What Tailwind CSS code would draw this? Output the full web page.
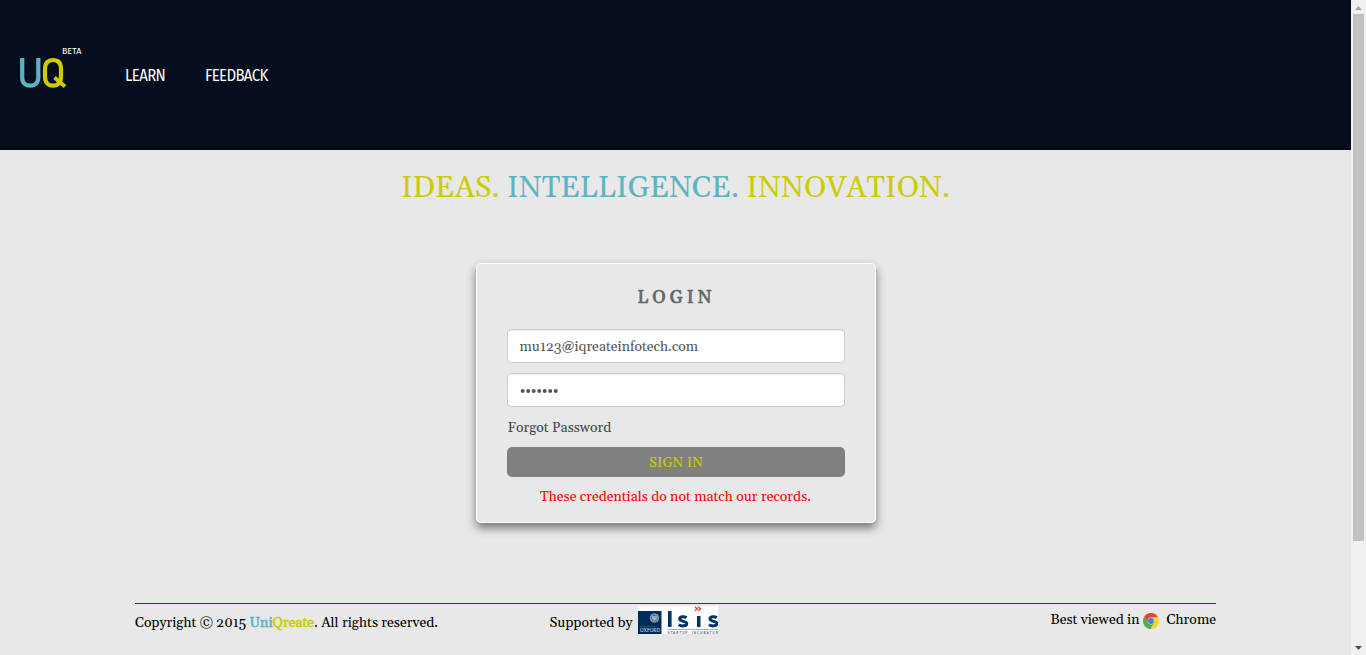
<!DOCTYPE html>
<html lang="en">
<head>
<meta charset="utf-8">
<title>UniQreate - Login</title>
<script src="https://cdn.jsdelivr.net/npm/@tailwindcss/browser@4"></script>
</head>
<body class="flex h-[655px] w-[1366px] overflow-hidden bg-[#e8e8e8] font-[Georgia,Gelasio,'Liberation_Serif',serif] text-[14px] leading-5 text-black">
<div class="flex w-[1351px] shrink-0 flex-col">
  <header class="flex h-[150px] shrink-0 items-start border-b-4 border-[#030a16] bg-[#060d1c] pl-5 font-['Trebuchet_MS','Fira_Sans','Open_Sans',sans-serif] text-white">
    <a class="relative mt-[57px] block h-8 w-[105px]">
      <svg class="block h-8 w-12" viewBox="0 0 48 32" fill="none" stroke-width="4.2">
        <path d="M2.2 1V20.5C2.2 26 5.5 28.7 10.2 28.7S18.3 26 18.3 20.5V1" stroke="#5bb4c3"/>
        <path d="M25 12C25 6 28 3 33 3S41 6 41 12V19.5C41 25.5 38 28.7 33 28.7S25 25.5 25 19.5Z" stroke="#cccc00"/>
        <path d="M34.5 20.5L45 29.5" stroke="#cccc00" stroke-width="3.8"/>
      </svg>
      <span class="absolute -top-[12px] left-[42px] scale-y-110 text-[9px] leading-3 tracking-[-0.1px]">BETA</span>
    </a>
    <nav class="mt-[65px] flex scale-y-110 text-[15px] tracking-[-0.65px]"><a class="w-20 whitespace-nowrap">LEARN</a><a class="whitespace-nowrap">FEEDBACK</a></nav>
  </header>
  <main class="flex h-[453px] shrink-0 flex-col items-center">
    <h1 class="mt-[22px] whitespace-nowrap text-[30px] leading-[33px] text-[#cccc00]">IDEAS. <span class="text-[#5bb4c3]">INTELLIGENCE.</span> INNOVATION.</h1>
    <section class="mt-[58px] ml-px flex h-[260px] w-[400px] flex-col rounded-[5px] border border-white px-[30px] shadow-[0_5px_10px_rgba(0,0,0,0.5)]">
      <h2 class="mt-[24px] pl-px text-center text-[18px] leading-5 tracking-[4px] text-[#666] [-webkit-text-stroke:0.7px_#666]">LOGIN</h2>
      <div class="mt-[21px] h-[34px] rounded-[4px] border border-[#ccc] bg-white pl-[11.5px] pt-[7px] text-[#555] shadow-[inset_0_1px_1px_rgba(0,0,0,0.075)]">mu123@iqreateinfotech.com</div>
      <div class="mt-[10px] flex h-[34px] items-center rounded-[4px] border border-[#ccc] bg-white pl-[11.5px] pt-[1px] text-[#555] shadow-[inset_0_1px_1px_rgba(0,0,0,0.075)]">
        <svg class="h-[6px] w-10" viewBox="0 0 40 6" fill="#555"><circle cx="2.7" cy="3" r="2"/><circle cx="8.2" cy="3" r="2"/><circle cx="13.7" cy="3" r="2"/><circle cx="19.2" cy="3" r="2"/><circle cx="24.7" cy="3" r="2"/><circle cx="30.2" cy="3" r="2"/><circle cx="35.7" cy="3" r="2"/></svg>
      </div>
      <a class="mt-[11px] pl-[0.5px] text-[#444]">Forgot Password</a>
      <button class="mt-[9px] h-[30px] rounded-[5px] bg-[#808080] pt-[2px] text-[#cccc00]">SIGN IN</button>
      <p class="mt-[10px] pr-px text-center text-[#f00]">These credentials do not match our records.</p>
    </section>
  </main>
  <footer class="mx-[135px] flex items-start border-t border-[#003f9f]">
    <p class="mt-[9px] w-[414.5px] whitespace-nowrap">Copyright © 2015 <span class="text-[#5bb4c3] [-webkit-text-stroke:0.6px_#5bb4c3]">Uni</span><span class="text-[#cccc00] [-webkit-text-stroke:0.6px_#cccc00]">Qreate</span>. All rights reserved.</p>
    <div class="flex w-[300px]"><span class="mt-[9px] w-[88.5px] whitespace-nowrap">Supported by</span>
      <svg class="mt-[2px] h-7 w-20" viewBox="0 0 80 28">
        <path fill="#fff" d="M0 0h80v28H0z"/><path fill="#002b5c" d="M0 5h23.5v23H0z"/>
        <circle cx="16.5" cy="12" r="4.8" fill="#526d91"/><circle cx="16.5" cy="12" r="4" fill="none" stroke="#a8b6c9" stroke-width=".8"/><path d="M14 10h5v3l-2.5 2-2.5-2z" fill="#9aaac0"/>
        <text x="2" y="21" font-family="Liberation Serif" font-size="2.6" textLength="16" fill="#8e9fb8">UNIVERSITY OF</text>
        <text x="2" y="26" font-family="Liberation Serif" font-size="5.5" textLength="20" lengthAdjust="spacingAndGlyphs" fill="#dbe1ea">OXFORD</text>
        <path fill="#003366" d="M30 5h3.6v16H30zM59 10h3.5v11H59z"/>
        <path d="M48.5 11.8C46 10 41.5 10.6 41.7 13.2S49 15 48.8 17.6 43.5 20.7 40.7 18.6M78.8 11.8C76.3 10 71.8 10.6 72 13.2S79.3 15 79.1 17.6 73.8 20.7 71 18.6" fill="none" stroke="#003366" stroke-width="3"/>
        <path d="M57 .7l2.2 2-2.2 2M60.3.7l2.2 2-2.2 2" fill="none" stroke="#ee3a30" stroke-width="1.4"/>
        <path d="M29.5 23.5H80" stroke="#ef7770" stroke-width=".8"/>
        <text x="29.5" y="27.8" font-family="Liberation Sans" font-weight="bold" font-size="3.2" textLength="20" fill="#4a6a90">STARTUP</text>
        <text x="54" y="27.8" font-family="Liberation Sans" font-weight="bold" font-size="3.2" textLength="26" fill="#4a6a90">INCUBATOR</text>
      </svg>
    </div>
    <p class="mt-[6px] ml-auto flex whitespace-nowrap">Best viewed in
      <svg class="mt-[3px] mr-[7px] ml-[4px] h-4 w-4" viewBox="0 0 16 16"><circle cx="8" cy="8" r="8" fill="#ffd51f"/><path d="M1.1 4A8 8 0 0 1 14.9 4L8 4.5 4.5 10z" fill="#e6463a"/><path d="M1.1 4A8 8 0 0 0 7.5 16L11 10 8 11.8 4.5 9.8z" fill="#43b34b"/><circle cx="8" cy="8" r="3.4" fill="#c9dcf2"/><circle cx="8" cy="8" r="2.9" fill="#3f83dc"/></svg>
      Chrome</p>
  </footer>
</div>
<aside class="flex w-[15px] shrink-0 flex-col items-center bg-[#f0f0f0]">
  <svg class="h-[14px] w-[7px] shrink-0" viewBox="0 0 7 14"><path d="M0 10h7L3.5 6z" fill="#a3a3a3"/></svg>
  <div class="h-[527px] w-[11px] shrink-0 bg-[#c1c1c1]"></div>
  <svg class="mt-auto h-[14px] w-[7px]" viewBox="0 0 7 14"><path d="M0 5h7L3.5 9z" fill="#505050"/></svg>
</aside>
</body>
</html>
